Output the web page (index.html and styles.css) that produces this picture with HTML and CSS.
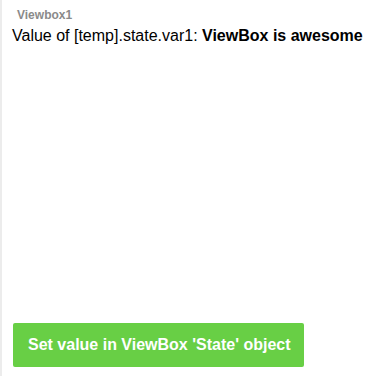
FILE: index.html
```html
<!DOCTYPE html>
<html>
<head>
<meta charset="utf-8">
<link rel="stylesheet" href="styles.css">
</head>
<body>
<div class="panel">
  <div class="label">Viewbox1</div>
  <div class="value">Value of [temp].state.var1: <b>ViewBox is awesome</b></div>
  <div class="spacer"></div>
  <button class="btn">Set value in ViewBox 'State' object</button>
</div>
</body>
</html>
```
FILE: styles.css
```css
html, body {
  margin: 0;
  padding: 0;
  background: #fff;
}
body {
  font-family: "Liberation Sans", Arial, sans-serif;
}
.panel {
  box-sizing: border-box;
  height: 376px;
  border-left: 2px solid #ececec;
  padding: 8px 0 9px 10px;
  display: flex;
  flex-direction: column;
  align-items: flex-start;
}
.label {
  font-size: 12px;
  font-weight: bold;
  color: #8a8a8a;
  line-height: 14px;
  padding-left: 5px;
}
.value {
  font-size: 16px;
  line-height: 18px;
  color: #000;
  margin-top: 5px;
}
.value b {
  font-weight: bold;
}
.spacer {
  flex: 1;
}
.btn {
  font-family: "Liberation Sans", Arial, sans-serif;
  font-size: 16px;
  font-weight: bold;
  color: #fff;
  background: #68cf45;
  border: none;
  border-radius: 2px;
  height: 44px;
  width: 291px;
  padding: 0 0 0 15px;
  margin-left: 1px;
  text-align: left;
  white-space: nowrap;
  cursor: pointer;
}
```
